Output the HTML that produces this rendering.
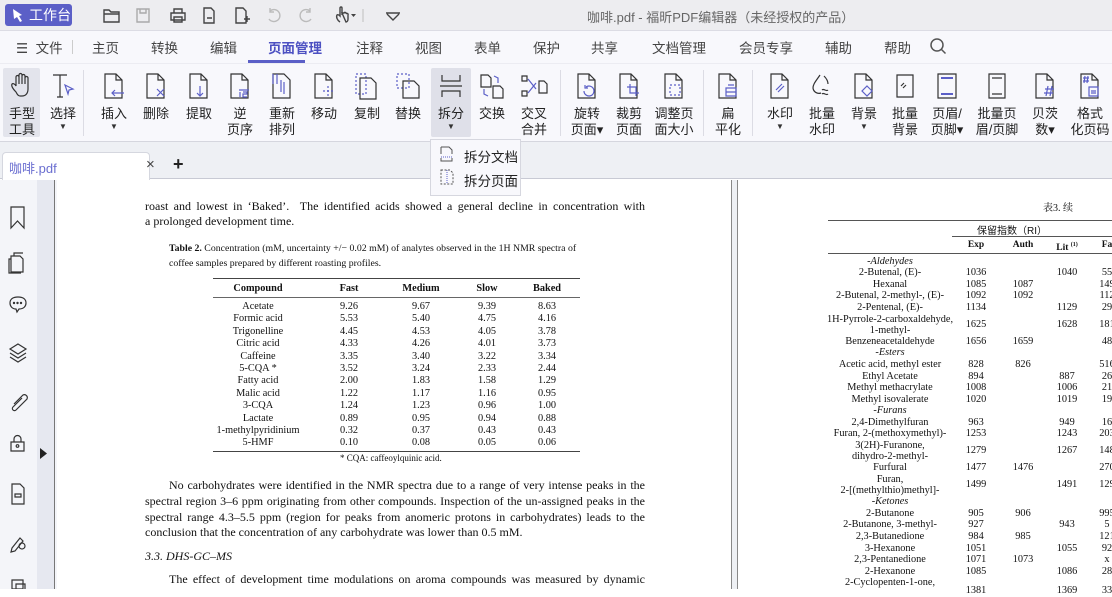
<!DOCTYPE html>
<html><head><meta charset="utf-8"><style>
*{margin:0;padding:0;box-sizing:border-box}
body{width:1112px;height:589px;overflow:hidden;position:relative;background:#fff;font-family:"Liberation Sans","Noto Sans CJK SC",sans-serif;color:#333}
.a{position:absolute}
.sf{font-family:"Liberation Serif","DejaVu Serif",serif;color:#111}
.m{position:absolute;top:37px;font-size:13.5px;color:#444}
.tb{position:absolute;top:70px;width:40px;margin-left:-20px;text-align:center;font-size:13px;line-height:16px;color:#222}
.tb svg{display:block;margin:2px auto 6px;width:28px;height:28px}
.tb .dd{font-size:8px;line-height:10px;color:#333}
.ln{position:absolute;left:145px;width:500px;font-size:12px;text-align:justify;text-align-last:justify;white-space:nowrap}
.tr{position:absolute;left:0;height:12px;font-size:10.3px;line-height:12px;width:1px}
.tr span{position:absolute;text-align:center;white-space:nowrap}
.c1{left:200px;width:116px}.c2{left:330px;width:38px}.c3{left:400px;width:42px}.c4{left:468px;width:38px}.c5{left:528px;width:38px}
.r1{left:815px;width:150px}.r2{left:960px;width:32px}.r3{left:1007px;width:32px}.r4{left:1051px;width:32px}.r5{left:1092px;width:30px}
</style></head><body>
<!-- title bar -->
<div class="a" style="left:0;top:0;width:1112px;height:30px;background:#ededf0"></div>
<div class="a" style="left:5px;top:4px;width:67px;height:22px;background:#5b5fc7;border-radius:3px;color:#fff;font-size:14px;line-height:22px;padding-left:24px">工作台</div>
<svg class="a" style="left:11px;top:8px" width="14" height="14" viewBox="0 0 14 14"><path d="M2 1l9 6-3 1 3 5-2 1-3-5-3 2z" fill="#fff"/></svg>
<svg class="a" style="left:100px;top:5px" width="320" height="20" viewBox="0 0 320 20" fill="none" stroke="#444" stroke-width="1.4">
<path d="M4 5h5l2 2h8v10H4z M4 9h15"/>
<path d="M37 4h12v13H37z M40 4v4h6V4" stroke="#aaa"/>
<path d="M71 8h14v7H71z M74 8V4h8v4 M74 12h8v5h-8z"/>
<path d="M104 3h7l3 3v12h-10z M107 13h5"/>
<path d="M136 3h7l3 3v12h-10z M144 14h6 M147 11v6"/>
<path d="M170 6a6 6 0 1 1-1 8 M170 3v4h4" stroke="#bbb"/>
<path d="M210 6a6 6 0 1 0 1 8 M210 3v4h-4" stroke="#bbb"/>
<path d="M240 17c-3-2-4-5-3-7 1-1 2 0 3 1V3a1 1 0 0 1 2 0v7 M242 8h2a1 1 0 0 1 2 1 1 1 0 0 1 2 1v4c0 2-1 3-2 3z"/>
<path d="M251 9h5l-2.5 3z" fill="#444" stroke="none"/>
<path d="M263 4v13" stroke="#ccc"/>
<path d="M286 8h14 M287 9l6 6 6-6"/>
</svg>
<div class="a" style="left:587px;top:7px;font-size:13px;color:#666">咖啡.pdf - 福昕PDF编辑器（未经授权的产品）</div>
<!-- menu bar -->
<div class="a" style="left:0;top:30px;width:1112px;height:33px;background:#f8f8fc;border-top:1px solid #dcdce4"></div>
<div class="m" style="left:16px">☰&nbsp; 文件</div>
<div class="a" style="left:72px;top:40px;width:1px;height:14px;background:#ccc"></div>
<div class="m" style="left:92px">主页</div><div class="m" style="left:151px">转换</div><div class="m" style="left:210px">编辑</div>
<div class="m" style="left:268px;color:#4d51c2;font-weight:bold">页面管理</div>
<div class="a" style="left:248px;top:60px;width:57px;height:3px;background:#5b5fc7"></div>
<div class="m" style="left:356px">注释</div><div class="m" style="left:415px">视图</div><div class="m" style="left:474px">表单</div><div class="m" style="left:533px">保护</div><div class="m" style="left:591px">共享</div><div class="m" style="left:652px">文档管理</div><div class="m" style="left:739px">会员专享</div><div class="m" style="left:825px">辅助</div><div class="m" style="left:884px">帮助</div>
<svg class="a" style="left:929px;top:37px" width="18" height="18" fill="none" stroke="#555" stroke-width="1.5"><circle cx="8" cy="8" r="6"/><path d="M12.5 12.5l4 4"/></svg>
<!-- toolbar -->
<div class="a" style="left:0;top:63px;width:1112px;height:79px;background:#f8f8fc;border-top:1px solid #ececf2;border-bottom:1px solid #d5d6de"></div>
<div class="a" style="left:3px;top:68px;width:37px;height:69px;background:#e3e4ec;border-radius:2px"></div>
<div class="a" style="left:431px;top:68px;width:40px;height:69px;background:#dfe0e9;border-radius:2px"></div>
<div class="a" style="left:83px;top:70px;width:1px;height:66px;background:#dcdce4"></div>
<div class="a" style="left:560px;top:70px;width:1px;height:66px;background:#dcdce4"></div>
<div class="a" style="left:703px;top:70px;width:1px;height:66px;background:#dcdce4"></div>
<div class="a" style="left:752px;top:70px;width:1px;height:66px;background:#dcdce4"></div>
<div class="tb" style="left:22px"><svg viewBox="0 0 28 28" fill="none" stroke="#333" stroke-width="1.2"><path d="M8 20c-3-3-5-6-4-8 1-1 3 0 4 2V5a1.5 1.5 0 0 1 3 0v7V3a1.5 1.5 0 0 1 3 0v9V4a1.5 1.5 0 0 1 3 0v8V6a1.5 1.5 0 0 1 3 0v11c0 4-2 7-6 7h-2c-2 0-3-2-4-4z"/></svg>手型<br>工具</div>
<div class="tb" style="left:63px"><svg viewBox="0 0 28 28" fill="none" stroke="#333" stroke-width="1.2"><path d="M4 3h14 M11 3v22 M8 25h6"/><path d="M16 13l8 4-4 1-1 4z" stroke="#5b5fc7"/></svg>选择<div class="dd">▼</div></div>
<div class="tb" style="left:114px"><svg viewBox="0 0 28 28" fill="none" stroke="#333" stroke-width="1.2"><path d="M5 2h11l6 6v18H5z M16 2v6h6"/><path d="M24 21h-12 M15 18l-3 3 3 3" stroke="#5b5fc7"/></svg>插入<div class="dd">▼</div></div>
<div class="tb" style="left:156px"><svg viewBox="0 0 28 28" fill="none" stroke="#333" stroke-width="1.2"><path d="M5 2h11l6 6v18H5z M16 2v6h6"/><path d="M15 17l7 7 M22 17l-7 7" stroke="#5b5fc7"/></svg>删除</div>
<div class="tb" style="left:199px"><svg viewBox="0 0 28 28" fill="none" stroke="#333" stroke-width="1.2"><path d="M5 2h11l6 6v18H5z M16 2v6h6"/><path d="M15 14v10 M12 21l3 3 3-3" stroke="#5b5fc7"/></svg>提取</div>
<div class="tb" style="left:240px"><svg viewBox="0 0 28 28" fill="none" stroke="#333" stroke-width="1.2"><path d="M5 2h11l6 6v18H5z M16 2v6h6"/><path d="M13 18h10 M14 20v5 M17 20h4v2h-4v3h4" stroke="#5b5fc7"/></svg>逆<br>页序</div>
<div class="tb" style="left:282px"><svg viewBox="0 0 28 28" fill="none" stroke="#333" stroke-width="1.2"><path d="M5 2h11l6 6v18H5z"/><path d="M5 2v10 M9 2v10 M13 8v12 M16 10v12" stroke="#5b5fc7"/></svg>重新<br>排列</div>
<div class="tb" style="left:324px"><svg viewBox="0 0 28 28" fill="none" stroke="#333" stroke-width="1.2"><path d="M5 2h11l6 6v18H5z M16 2v6h6"/><path d="M18 14v10 M13 19h10" stroke="#5b5fc7" stroke-dasharray="2 2"/></svg>移动</div>
<div class="tb" style="left:367px"><svg viewBox="0 0 28 28" fill="none" stroke="#333" stroke-width="1.2"><path d="M3 2h10v20H3z" stroke="#5b5fc7" stroke-dasharray="2 2"/><path d="M7 6h11l5 5v16H7z"/></svg>复制</div>
<div class="tb" style="left:408px"><svg viewBox="0 0 28 28" fill="none" stroke="#333" stroke-width="1.2"><path d="M3 2h12v14H3z" stroke="#5b5fc7" stroke-dasharray="2 2"/><path d="M9 9h11l5 5v12H9z"/></svg>替换</div>
<div class="tb" style="left:451px"><svg viewBox="0 0 28 28" fill="none" stroke="#333" stroke-width="1.2"><path d="M5 3v6h18V3 M5 25v-6h18v6 M3 14h22"/></svg>拆分<div class="dd">▼</div></div>
<div class="tb" style="left:492px"><svg viewBox="0 0 28 28" fill="none" stroke="#333" stroke-width="1.2"><path d="M3 3h7l3 3v9H3z M15 14h7l3 3v9H15z"/><path d="M16 4l4 2v5 M6 17v5l4 2" stroke="#5b5fc7"/></svg>交换</div>
<div class="tb" style="left:534px"><svg viewBox="0 0 28 28" fill="none" stroke="#333" stroke-width="1.2"><path d="M2 4h5v5H2z M2 19h5v5H2z M19 9h5l3 3v9h-8z"/><path d="M8 7l8 10 M8 21l8-10" stroke="#5b5fc7"/></svg>交叉<br>合并</div>
<div class="tb" style="left:587px;width:44px;margin-left:-22px"><svg viewBox="0 0 28 28" fill="none" stroke="#333" stroke-width="1.2"><path d="M5 2h11l6 6v18H5z M16 2v6h6"/><path d="M11 19a5 5 0 1 0 2-4 M12 13v3h3" stroke="#5b5fc7"/></svg>旋转<br>页面▾</div>
<div class="tb" style="left:629px"><svg viewBox="0 0 28 28" fill="none" stroke="#333" stroke-width="1.2"><path d="M5 2h11l6 6v18H5z M16 2v6h6"/><path d="M12 15h9v9 M15 12v9h9" stroke="#5b5fc7"/></svg>裁剪<br>页面</div>
<div class="tb" style="left:674px;width:48px;margin-left:-24px"><svg viewBox="0 0 28 28" fill="none" stroke="#333" stroke-width="1.2"><path d="M5 2h11l6 6v18H5z M16 2v6h6"/><path d="M10 13h10v10H10z" stroke="#5b5fc7" stroke-dasharray="2 2"/></svg>调整页<br>面大小</div>
<div class="tb" style="left:728px"><svg viewBox="0 0 28 28" fill="none" stroke="#333" stroke-width="1.2"><path d="M5 2h11l6 6v18H5z M16 2v6h6"/><path d="M12 16h10v8H12z M12 20h10 M14 13h6" stroke="#5b5fc7"/></svg>扁<br>平化</div>
<div class="tb" style="left:780px"><svg viewBox="0 0 28 28" fill="none" stroke="#333" stroke-width="1.2"><path d="M5 2h11l6 6v18H5z M16 2v6h6"/><path d="M10 18l6-6 M12 20l6-6" stroke="#5b5fc7"/></svg>水印<div class="dd">▼</div></div>
<div class="tb" style="left:822px"><svg viewBox="0 0 28 28" fill="none" stroke="#333" stroke-width="1.2"><path d="M12 3c-4 6-7 9-7 13a6 6 0 0 0 8 5"/><path d="M14 18c2-2 4 2 6 0 M14 22c2-2 4 2 6 0 M16 4c3 3 4 5 4 8" stroke="#333"/></svg>批量<br>水印</div>
<div class="tb" style="left:864px"><svg viewBox="0 0 28 28" fill="none" stroke="#333" stroke-width="1.2"><path d="M5 2h11l6 6v18H5z M16 2v6h6"/><path d="M17 14l5 5-5 5-5-5z" stroke="#5b5fc7"/></svg>背景<div class="dd">▼</div></div>
<div class="tb" style="left:905px"><svg viewBox="0 0 28 28" fill="none" stroke="#333" stroke-width="1.2"><path d="M6 3h16v22H6z M10 14l3-3 M12 16l3-3"/></svg>批量<br>背景</div>
<div class="tb" style="left:947px;width:44px;margin-left:-22px"><svg viewBox="0 0 28 28" fill="none" stroke="#333" stroke-width="1.2"><path d="M5 2h18v24H5z"/><path d="M8 6h12 M8 22h12" stroke="#5b5fc7" stroke-width="2"/></svg>页眉/<br>页脚▾</div>
<div class="tb" style="left:997px;width:54px;margin-left:-27px"><svg viewBox="0 0 28 28" fill="none" stroke="#333" stroke-width="1.2"><path d="M6 2h16v24H6z M9 6h10 M9 22h10"/></svg>批量页<br>眉/页脚</div>
<div class="tb" style="left:1045px"><svg viewBox="0 0 28 28" fill="none" stroke="#333" stroke-width="1.2"><path d="M5 2h11l6 6v18H5z M16 2v6h6"/><path d="M14 17h9 M13 21h9 M17 14l-2 10 M21 14l-2 10" stroke="#5b5fc7"/></svg>贝茨<br>数▾</div>
<div class="tb" style="left:1090px;width:48px;margin-left:-24px"><svg viewBox="0 0 28 28" fill="none" stroke="#333" stroke-width="1.2"><path d="M5 2h11l6 6v18H5z M16 2v6h6"/><path d="M7 6h6 M7 9h6 M9 4l-1 7 M12 4l-1 7" stroke="#5b5fc7"/><path d="M13 15h9v9h-9z M15 19h5 M15 21h5" stroke="#5b5fc7"/></svg>格式<br>化页码</div>
<!-- tab bar -->
<div class="a" style="left:0;top:142px;width:1112px;height:37px;background:#eef0f4;border-bottom:1px solid #c8cad4"></div>
<div class="a" style="left:2px;top:152px;width:148px;height:28px;background:#fff;border:1px solid #d5d7df;border-bottom:none;border-radius:4px 4px 0 0"></div>
<div class="a" style="left:9px;top:158px;font-size:13px;color:#6a6ed0">咖啡.pdf</div>
<div class="a" style="left:146px;top:156px;font-size:15px;color:#444">×</div>
<div class="a" style="left:173px;top:154px;font-size:18px;color:#222;font-weight:bold">+</div>
<!-- dropdown -->
<div class="a" style="left:430px;top:139px;width:91px;height:57px;background:#f8f8fc;border:1px solid #d6d7df"></div>
<svg class="a" style="left:440px;top:146px" width="14" height="44" fill="none" stroke="#555" stroke-width="1"><path d="M1 1h8l3 3v4M1 8V1"/><path d="M1 11h12" stroke="#5b5fc7" stroke-dasharray="1 1"/><path d="M1 12v3h11v-3"/><path d="M1 24h9l3 3v11H1z" stroke-dasharray="2 1.5"/><path d="M7 24v14" stroke="#5b5fc7" stroke-dasharray="1 1"/></svg>
<div class="a" style="left:464px;top:146px;font-size:13.5px;color:#222">拆分文档</div>
<div class="a" style="left:464px;top:170px;font-size:13.5px;color:#222">拆分页面</div>
<!-- left sidebar -->
<div class="a" style="left:0;top:180px;width:37px;height:409px;background:#f4f5f9"></div>
<div class="a" style="left:37px;top:180px;width:17px;height:409px;background:#e6e8f0"></div>
<div class="a" style="left:54px;top:180px;width:3px;height:409px;background:#f4f5f9;border-left:1px solid #777"></div>
<svg class="a" style="left:0;top:180px" width="37" height="409" fill="none" stroke="#333" stroke-width="1.2">
<path d="M11 27h13v21l-6.5-7L11 48z"/>
<path d="M11 76h9l3 3v13h-12z M14 76v-3h9 M11 79h-2v14h12" />
<path d="M18 117c-6 0-8 3-8 6s2 6 6 6l1 3 2-3c5 0 7-3 7-6s-2-6-8-6z"/><circle cx="14" cy="123" r=".6" fill="#333"/><circle cx="17.5" cy="123" r=".6" fill="#333"/><circle cx="21" cy="123" r=".6" fill="#333"/>
<path d="M18 164l8 5-8 5-8-5z M10 173l8 5 8-5 M10 177l8 5 8-5"/>
<path d="M14 224l9-9a3 3 0 0 1 4 4l-11 11a2 2 0 0 1-3-3l9-9"/>
<path d="M11 262h13v9H11z M14 262v-3a3.5 3.5 0 0 1 7 0v3"/><circle cx="17.5" cy="266" r="1.3"/>
<path d="M12 304h8l4 4v16H12z M15 314h6v3h-6z"/>
<path d="M12 368l8-10 3 3-8 10-4 1z"/><circle cx="22" cy="366" r="3"/>
<path d="M12 400h11v9H12z M16 404h9v6h-9z"/>
</svg>
<svg class="a" style="left:40px;top:448px" width="8" height="11"><path d="M0 0l7 5.5L0 11z" fill="#222"/></svg>
<!-- page gap -->
<div class="a" style="left:731px;top:180px;width:7px;height:409px;background:#eef0f4;border-left:1px solid #888;border-right:1px solid #888"></div>
<!-- left page text -->
<div class="sf">
<div class="ln" style="top:199px">roast and lowest in ‘Baked’.&nbsp; The identified acids showed a general decline in concentration with</div>
<div class="ln" style="top:214px;text-align-last:left">a prolonged development time.</div>
<div class="a" style="left:169px;top:243px;font-size:9.8px;white-space:nowrap"><b>Table 2.</b> Concentration (mM, uncertainty +/− 0.02 mM) of analytes observed in the 1H NMR spectra of</div>
<div class="a" style="left:169px;top:258px;font-size:9.8px">coffee samples prepared by different roasting profiles.</div>
<div class="a" style="left:213px;top:278px;width:367px;border-top:1.5px solid #444"></div>
<div class="a" style="left:213px;top:297px;width:367px;border-top:1px solid #666"></div>
<div class="a" style="left:213px;top:451px;width:367px;border-top:1.5px solid #444"></div>
<div class="tr" style="top:283px;font-weight:bold"><span class="c1">Compound</span><span class="c2">Fast</span><span class="c3">Medium</span><span class="c4">Slow</span><span class="c5">Baked</span></div>
<div class="tr" style="top:301px"><span class="c1">Acetate</span><span class="c2">9.26</span><span class="c3">9.67</span><span class="c4">9.39</span><span class="c5">8.63</span></div>
<div class="tr" style="top:313.4px"><span class="c1">Formic acid</span><span class="c2">5.53</span><span class="c3">5.40</span><span class="c4">4.75</span><span class="c5">4.16</span></div>
<div class="tr" style="top:325.8px"><span class="c1">Trigonelline</span><span class="c2">4.45</span><span class="c3">4.53</span><span class="c4">4.05</span><span class="c5">3.78</span></div>
<div class="tr" style="top:338.2px"><span class="c1">Citric acid</span><span class="c2">4.33</span><span class="c3">4.26</span><span class="c4">4.01</span><span class="c5">3.73</span></div>
<div class="tr" style="top:350.6px"><span class="c1">Caffeine</span><span class="c2">3.35</span><span class="c3">3.40</span><span class="c4">3.22</span><span class="c5">3.34</span></div>
<div class="tr" style="top:363px"><span class="c1">5-CQA *</span><span class="c2">3.52</span><span class="c3">3.24</span><span class="c4">2.33</span><span class="c5">2.44</span></div>
<div class="tr" style="top:375.4px"><span class="c1">Fatty acid</span><span class="c2">2.00</span><span class="c3">1.83</span><span class="c4">1.58</span><span class="c5">1.29</span></div>
<div class="tr" style="top:387.8px"><span class="c1">Malic acid</span><span class="c2">1.22</span><span class="c3">1.17</span><span class="c4">1.16</span><span class="c5">0.95</span></div>
<div class="tr" style="top:400.2px"><span class="c1">3-CQA</span><span class="c2">1.24</span><span class="c3">1.23</span><span class="c4">0.96</span><span class="c5">1.00</span></div>
<div class="tr" style="top:412.6px"><span class="c1">Lactate</span><span class="c2">0.89</span><span class="c3">0.95</span><span class="c4">0.94</span><span class="c5">0.88</span></div>
<div class="tr" style="top:425px"><span class="c1">1-methylpyridinium</span><span class="c2">0.32</span><span class="c3">0.37</span><span class="c4">0.43</span><span class="c5">0.43</span></div>
<div class="tr" style="top:437.4px"><span class="c1">5-HMF</span><span class="c2">0.10</span><span class="c3">0.08</span><span class="c4">0.05</span><span class="c5">0.06</span></div>
<div class="a" style="left:340px;top:453px;font-size:9px">* CQA: caffeoylquinic acid.</div>
<div class="ln" style="top:478px;left:169px;width:476px">No carbohydrates were identified in the NMR spectra due to a range of very intense peaks in the</div>
<div class="ln" style="top:494px">spectral region 3–6 ppm originating from other compounds. Inspection of the un-assigned peaks in the</div>
<div class="ln" style="top:509.5px">spectral range 4.3–5.5 ppm (region for peaks from anomeric protons in carbohydrates) leads to the</div>
<div class="ln" style="top:525px;text-align-last:left">conclusion that the concentration of any carbohydrate was lower than 0.5 mM.</div>
<div class="a" style="left:145px;top:549px;font-size:12px;font-style:italic">3.3. DHS-GC–MS</div>
<div class="ln" style="top:572px;left:169px;width:476px">The effect of development time modulations on aroma compounds was measured by dynamic</div>
</div>
<!-- right page -->
<div class="sf">
<div class="a" style="left:1043px;top:199px;font-size:10px;font-family:'Liberation Serif','Noto Serif CJK SC',serif">表3. 续</div>
<div class="a" style="left:828px;top:220px;width:284px;border-top:1.5px solid #555"></div>
<div class="a" style="left:952px;top:236px;width:160px;border-top:1px solid #555"></div>
<div class="a" style="left:828px;top:253px;width:284px;border-top:1px solid #555"></div>
<div class="a" style="left:977px;top:222px;font-size:10px;font-family:'Liberation Sans','Noto Sans CJK SC',sans-serif">保留指数（RI）</div>
<div class="tr" style="top:239px;font-weight:bold;font-size:9.5px"><span class="r2">Exp</span><span class="r3">Auth</span><span class="r4">Lit <sup style="font-size:6px">(1)</sup></span><span class="r5">Fa</span></div>
<div class="tr" style="top:256px;font-style:italic"><span class="r1">-Aldehydes</span></div>
<div class="tr" style="top:267px"><span class="r1">2-Butenal, (E)-</span><span class="r2">1036</span><span class="r4">1040</span><span class="r5">55</span></div>
<div class="tr" style="top:279px"><span class="r1">Hexanal</span><span class="r2">1085</span><span class="r3">1087</span><span class="r5">149</span></div>
<div class="tr" style="top:290px"><span class="r1">2-Butenal, 2-methyl-, (E)-</span><span class="r2">1092</span><span class="r3">1092</span><span class="r5">112</span></div>
<div class="tr" style="top:302px"><span class="r1">2-Pentenal, (E)-</span><span class="r2">1134</span><span class="r4">1129</span><span class="r5">29</span></div>
<div class="tr" style="top:314px"><span class="r1">1H-Pyrrole-2-carboxaldehyde,</span></div>
<div class="tr" style="top:325px"><span class="r1">1-methyl-</span></div>
<div class="tr" style="top:319px"><span class="r2">1625</span><span class="r4">1628</span><span class="r5">181</span></div>
<div class="tr" style="top:336px"><span class="r1">Benzeneacetaldehyde</span><span class="r2">1656</span><span class="r3">1659</span><span class="r5">48</span></div>
<div class="tr" style="top:347px;font-style:italic"><span class="r1">-Esters</span></div>
<div class="tr" style="top:359px"><span class="r1">Acetic acid, methyl ester</span><span class="r2">828</span><span class="r3">826</span><span class="r5">516</span></div>
<div class="tr" style="top:371px"><span class="r1">Ethyl Acetate</span><span class="r2">894</span><span class="r4">887</span><span class="r5">26</span></div>
<div class="tr" style="top:382px"><span class="r1">Methyl methacrylate</span><span class="r2">1008</span><span class="r4">1006</span><span class="r5">21</span></div>
<div class="tr" style="top:394px"><span class="r1">Methyl isovalerate</span><span class="r2">1020</span><span class="r4">1019</span><span class="r5">19</span></div>
<div class="tr" style="top:405px;font-style:italic"><span class="r1">-Furans</span></div>
<div class="tr" style="top:417px"><span class="r1">2,4-Dimethylfuran</span><span class="r2">963</span><span class="r4">949</span><span class="r5">16</span></div>
<div class="tr" style="top:428px"><span class="r1">Furan, 2-(methoxymethyl)-</span><span class="r2">1253</span><span class="r4">1243</span><span class="r5">203</span></div>
<div class="tr" style="top:440px"><span class="r1">3(2H)-Furanone,</span></div>
<div class="tr" style="top:451px"><span class="r1">dihydro-2-methyl-</span></div>
<div class="tr" style="top:445px"><span class="r2">1279</span><span class="r4">1267</span><span class="r5">148</span></div>
<div class="tr" style="top:462px"><span class="r1">Furfural</span><span class="r2">1477</span><span class="r3">1476</span><span class="r5">270</span></div>
<div class="tr" style="top:474px"><span class="r1">Furan,</span></div>
<div class="tr" style="top:485px"><span class="r1">2-[(methylthio)methyl]-</span></div>
<div class="tr" style="top:479px"><span class="r2">1499</span><span class="r4">1491</span><span class="r5">129</span></div>
<div class="tr" style="top:496px;font-style:italic"><span class="r1">-Ketones</span></div>
<div class="tr" style="top:508px"><span class="r1">2-Butanone</span><span class="r2">905</span><span class="r3">906</span><span class="r5">995</span></div>
<div class="tr" style="top:519px"><span class="r1">2-Butanone, 3-methyl-</span><span class="r2">927</span><span class="r4">943</span><span class="r5">5</span></div>
<div class="tr" style="top:531px"><span class="r1">2,3-Butanedione</span><span class="r2">984</span><span class="r3">985</span><span class="r5">121</span></div>
<div class="tr" style="top:543px"><span class="r1">3-Hexanone</span><span class="r2">1051</span><span class="r4">1055</span><span class="r5">92</span></div>
<div class="tr" style="top:554px"><span class="r1">2,3-Pentanedione</span><span class="r2">1071</span><span class="r3">1073</span><span class="r5">x</span></div>
<div class="tr" style="top:566px"><span class="r1">2-Hexanone</span><span class="r2">1085</span><span class="r4">1086</span><span class="r5">28</span></div>
<div class="tr" style="top:577px"><span class="r1">2-Cyclopenten-1-one,</span></div>
<div class="tr" style="top:585px"><span class="r2">1381</span><span class="r4">1369</span><span class="r5">33</span></div>
</div>
</body></html>
